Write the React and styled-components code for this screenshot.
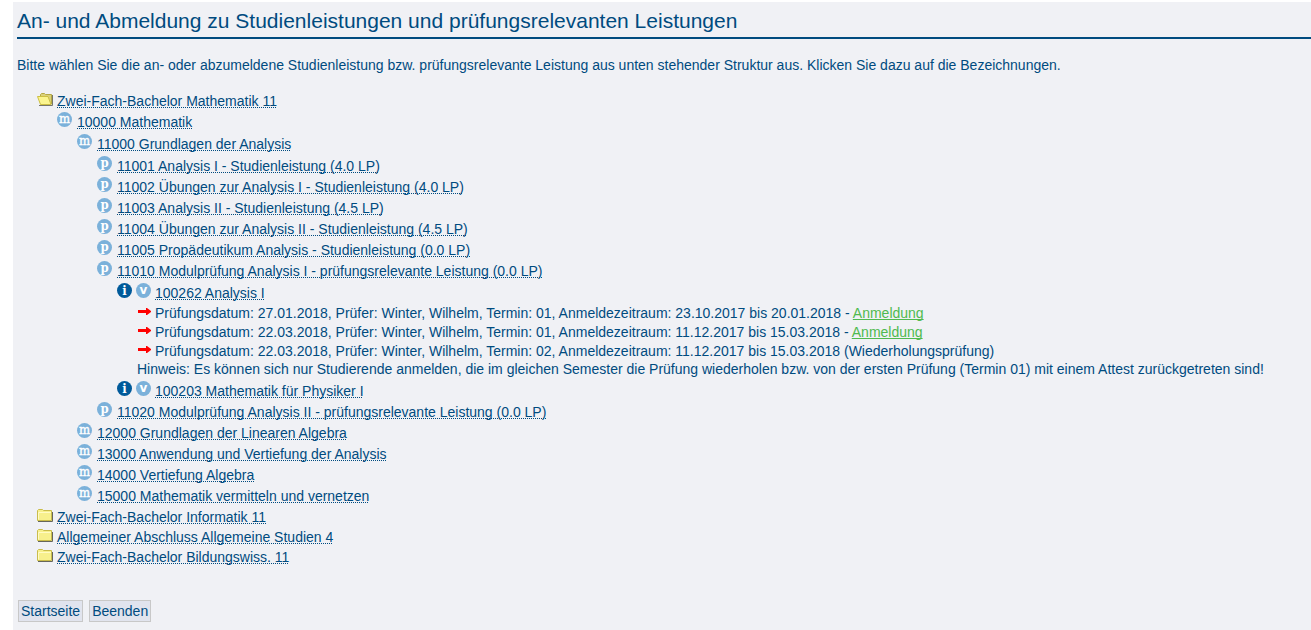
import React from 'react';
import styled, { createGlobalStyle } from 'styled-components';

const modules = [
	{
		title: '11000 Grundlagen der Analysis',
		parts: [
			{ title: '11001 Analysis I - Studienleistung (4.0 LP)' },
			{ title: '11002 Übungen zur Analysis I - Studienleistung (4.0 LP)' },
			{ title: '11003 Analysis II - Studienleistung (4.5 LP)' },
			{ title: '11004 Übungen zur Analysis II - Studienleistung (4.5 LP)' },
			{ title: '11005 Propädeutikum Analysis - Studienleistung (0.0 LP)' },
			{
				title: '11010 Modulprüfung Analysis I - prüfungsrelevante Leistung (0.0 LP)',
				courses: [
					{
						title: '100262 Analysis I',
						exams: [
							{
								text:
									'Prüfungsdatum: 27.01.2018, Prüfer: Winter, Wilhelm, Termin: 01, Anmeldezeitraum: 23.10.2017 bis 20.01.2018',
								open: true,
							},
							{
								text:
									'Prüfungsdatum: 22.03.2018, Prüfer: Winter, Wilhelm, Termin: 01, Anmeldezeitraum: 11.12.2017 bis 15.03.2018',
								open: true,
							},
							{
								text:
									'Prüfungsdatum: 22.03.2018, Prüfer: Winter, Wilhelm, Termin: 02, Anmeldezeitraum: 11.12.2017 bis 15.03.2018 (Wiederholungsprüfung)',
								hint:
									'Hinweis: Es können sich nur Studierende anmelden, die im gleichen Semester die Prüfung wiederholen bzw. von der ersten Prüfung (Termin 01) mit einem Attest zurückgetreten sind!',
							},
						],
					},
					{ title: '100203 Mathematik für Physiker I' },
				],
			},
			{
				title: '11020 Modulprüfung Analysis II - prüfungsrelevante Leistung (0.0 LP)',
			},
		],
	},
	{ title: '12000 Grundlagen der Linearen Algebra' },
	{ title: '13000 Anwendung und Vertiefung der Analysis' },
	{ title: '14000 Vertiefung Algebra' },
	{ title: '15000 Mathematik vermitteln und vernetzen' },
];

const programs = [
	{
		title: 'Zwei-Fach-Bachelor Mathematik 11',
		areas: [{ title: '10000 Mathematik', modules }],
	},
	{ title: 'Zwei-Fach-Bachelor Informatik 11' },
	{ title: 'Allgemeiner Abschluss Allgemeine Studien 4' },
	{ title: 'Zwei-Fach-Bachelor Bildungswiss. 11' },
];

const FolderIcon = ({ open }) => (
	<FolderSvg viewBox="0 0 16 14" aria-hidden="true">
		{open ? (
			<>
				<path d="M2 13.5h13.5V3" fill="none" stroke="#77776a" />
				<path
					d="M3.5 12V2.5l1-1h3l1 1h6V12z"
					fill="#d9d07a"
					stroke="#b5a843"
				/>
				<path d="M.5 4.5H11l3 8H3.5z" fill="#fbf58f" stroke="#cdbf43" />
			</>
		) : (
			<>
				<path d="M1 13.5h14.5V4" fill="none" stroke="#66665c" />
				<path
					d="M.5 12.5v-10l1-1h4l1 1h8v10z"
					fill="#f7f08c"
					stroke="#c9bc4b"
				/>
				<path d="M1.5 11.5v-7H14" fill="none" stroke="#fffbc4" />
			</>
		)}
	</FolderSvg>
);

const Badge = ({ kind }) => (
	<BadgeSvg viewBox="0 0 15 15" aria-hidden="true">
		<circle cx="7.5" cy="7.5" r="7.5" fill={kind === 'i' ? '#005a9a' : '#7bb1da'} />
		<BadgeLetter x="7.5" y={kind === 'i' ? 12 : 11} $kind={kind}>
			{kind}
		</BadgeLetter>
	</BadgeSvg>
);

const Arrow = () => (
	<ArrowSvg viewBox="0 0 14 7" aria-hidden="true">
		<path d="M1 2h8V0h1l4 3v1l-4 3H9V5H1z" fill="#f00" />
	</ArrowSvg>
);

const Exam = ({ exam }) => (
	<li>
		<ExamRow>
			<Arrow />
			<span>
				{exam.text}
				{exam.open && (
					<>
						{' - '}
						<RegisterLink href="#anmeldung">Anmeldung</RegisterLink>
					</>
				)}
			</span>
		</ExamRow>
		{exam.hint && <Hint>{exam.hint}</Hint>}
	</li>
);

const Course = ({ course }) => (
	<li>
		<Row>
			<Badge kind="i" />
			<Badge kind="v" />
			<NodeLink href="#kurs">{course.title}</NodeLink>
		</Row>
		{course.exams && (
			<ExamList>
				{course.exams.map((exam, index) => (
					<Exam key={index} exam={exam} />
				))}
			</ExamList>
		)}
	</li>
);

const Part = ({ part }) => (
	<li>
		<ModuleRow>
			<Badge kind="p" />
			<NodeLink href="#leistung">{part.title}</NodeLink>
		</ModuleRow>
		{part.courses && (
			<Branch>
				{part.courses.map((course) => (
					<Course key={course.title} course={course} />
				))}
			</Branch>
		)}
	</li>
);

const Module = ({ module }) => (
	<li>
		<ModuleRow>
			<Badge kind="m" />
			<NodeLink href="#modul">{module.title}</NodeLink>
		</ModuleRow>
		{module.modules && (
			<Branch>
				{module.modules.map((child) => (
					<Module key={child.title} module={child} />
				))}
			</Branch>
		)}
		{module.parts && (
			<Branch>
				{module.parts.map((part) => (
					<Part key={part.title} part={part} />
				))}
			</Branch>
		)}
	</li>
);

const App = () => (
	<>
		<GlobalStyle />
		<Page>
			<Title>
				An- und Abmeldung zu Studienleistungen und prüfungsrelevanten Leistungen
			</Title>
			<Intro>
				Bitte wählen Sie die an- oder abzumeldene Studienleistung bzw.
				prüfungsrelevante Leistung aus unten stehender Struktur aus. Klicken Sie
				dazu auf die Bezeichnungen.
			</Intro>
			<Branch>
				{programs.map((program) => (
					<li key={program.title}>
						<FolderRow>
							<FolderIcon open={Boolean(program.areas)} />
							<NodeLink href="#studiengang">{program.title}</NodeLink>
						</FolderRow>
						{program.areas && (
							<Branch>
								{program.areas.map((area) => (
									<Module key={area.title} module={area} />
								))}
							</Branch>
						)}
					</li>
				))}
			</Branch>
			<Actions>
				<Button type="button">Startseite</Button>
				<Button type="button">Beenden</Button>
			</Actions>
		</Page>
	</>
);

const GlobalStyle = createGlobalStyle`
	body {
		margin: 0;
		background-color: white;
		color: #004b7f;
		font-family: Arial, 'Liberation Sans', sans-serif;
		font-size: 14px;
		line-height: 17px;
	}
`;

const Page = styled.main`
	margin: 2px 0 0 13px;
	padding: 6px 0 8px 4px;
	background-color: #f0f1f5;
`;

const Title = styled.h1`
	margin: 0;
	padding-bottom: 3px;
	border-bottom: 2px solid #004b7f;
	font-size: 21px;
	font-weight: 400;
	line-height: 26px;
`;

const Intro = styled.p`
	margin: 18px 0 16px;
`;

const Branch = styled.ul`
	margin: 0;
	padding: 1px 0 0 20px;
	list-style: none;
`;

const ExamList = styled(Branch)`
	padding-top: 0;
`;

const Row = styled.div`
	display: flex;
	align-items: flex-start;
	gap: 4px;
	line-height: 21px;
`;

const ModuleRow = styled(Row)`
	gap: 5px;
`;

const FolderRow = styled(Row)`
	line-height: 20px;
`;

const ExamRow = styled(Row)`
	line-height: 19px;
`;

const Hint = styled.p`
	margin: 0 0 4px;
	line-height: 16px;
`;

const NodeLink = styled.a`
	color: inherit;
	text-decoration: underline dotted 1px;
	text-underline-offset: 1px;
	text-decoration-skip-ink: none;
`;

const RegisterLink = styled.a`
	color: #4fba4f;
	text-decoration: underline;
	text-decoration-skip-ink: none;
`;

const FolderSvg = styled.svg`
	flex: none;
	width: 16px;
	height: 14px;
	margin-top: 1px;
`;

const BadgeSvg = styled.svg`
	flex: none;
	width: 15px;
	height: 15px;
`;

const BadgeLetter = styled.text`
	fill: white;
	font-family: ${({ $kind }) =>
		$kind === 'v'
			? "'DejaVu Sans', sans-serif"
			: "'DejaVu Serif Condensed', 'DejaVu Serif', serif"};
	font-size: ${({ $kind }) => ($kind === 'v' ? 12 : 13)}px;
	font-weight: ${({ $kind }) => ($kind === 'm' ? 400 : 700)};
	stroke: white;
	stroke-width: ${({ $kind }) => ($kind === 'm' ? '0.4px' : 0)};
	text-anchor: middle;
`;

const ArrowSvg = styled.svg`
	flex: none;
	width: 14px;
	height: 7px;
	margin-top: 4px;
`;

const Actions = styled.div`
	display: flex;
	gap: 6px;
	margin-top: 33px;
	padding-left: 1px;
`;

const Button = styled.button`
	padding: 1px 2px;
	border: 1px solid #c8c8c8;
	background-color: #e1e4ee;
	color: inherit;
	font: inherit;
	line-height: 18px;
	cursor: pointer;
`;

export default App;
